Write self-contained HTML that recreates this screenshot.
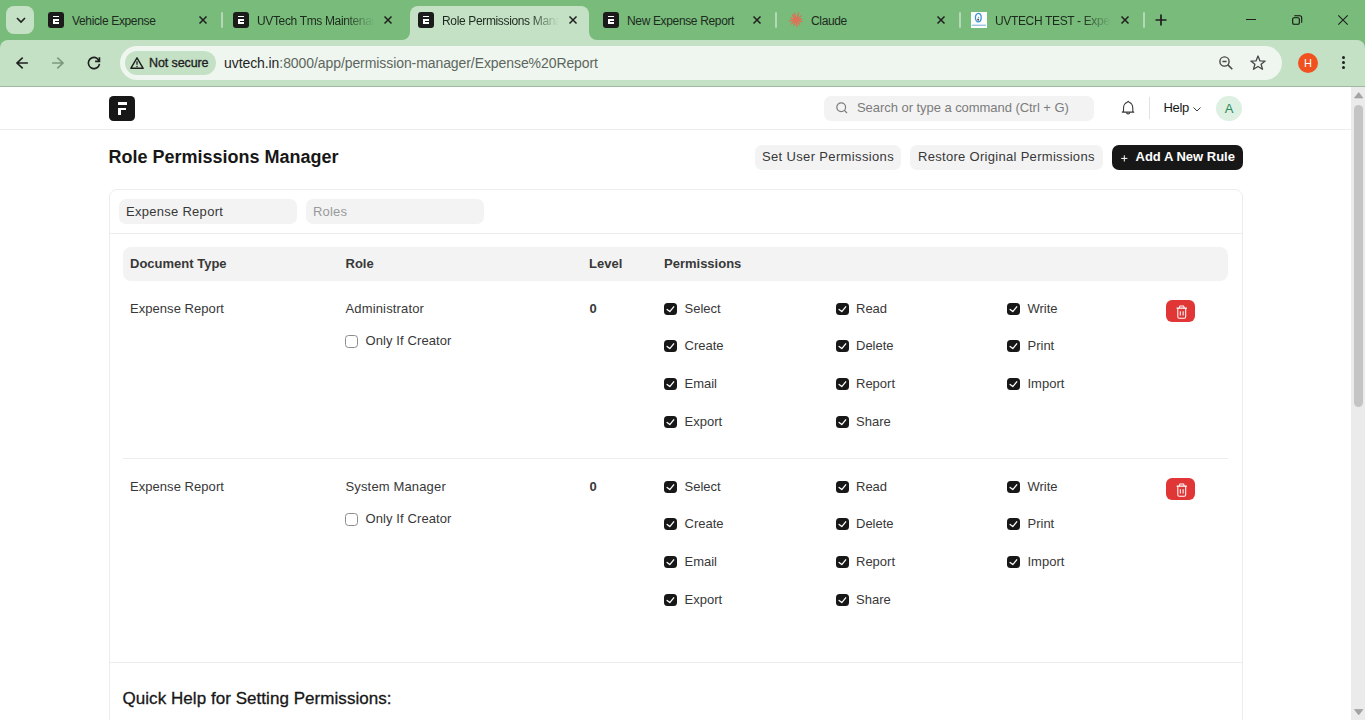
<!DOCTYPE html>
<html><head><meta charset="utf-8">
<style>
*{box-sizing:border-box;margin:0;padding:0}
html,body{width:1365px;height:720px;overflow:hidden;background:#fff;font-family:"Liberation Sans",sans-serif;position:relative}
.a{position:absolute}
.t{position:absolute;white-space:nowrap;line-height:1}
svg{position:absolute;overflow:visible}
/* chrome */
#strip{left:0;top:0;width:1365px;height:50px;background:#78bb7b}
#toolbar{left:0;top:40px;width:1365px;height:47px;background:#c4e1c5;border-radius:8px 8px 0 0}
#tbline{left:0;top:86px;width:1365px;height:1px;background:#9fb8a0}
.tabt{font-size:12px;color:#1d2a1e;top:15px;overflow:hidden;letter-spacing:-0.35px}
.fade{-webkit-mask-image:linear-gradient(to right,#000 75%,transparent 100%);mask-image:linear-gradient(to right,#000 75%,transparent 100%)}
.fav{width:16px;height:16px;top:12px;background:#1b1b1b;border-radius:3px}
.fav i{position:absolute;background:#fff;display:block}
.sep{width:2px;height:16px;top:12px;background:#b5d8b6;border-radius:1px}
/* frappe */
.txt{color:#383838;font-size:13px}
.cb{position:absolute;width:13px;height:12.2px;border-radius:3.5px;background:#171717}
.cb svg{left:0;top:0}
.cbo{position:absolute;width:13px;height:13px;border-radius:3.5px;border:1px solid #8c8c8c;background:#fff}
</style></head><body>

<!-- ===== Chrome tab strip ===== -->
<div id="strip" class="a"></div>
<!-- tab search dropdown -->
<div class="a" style="left:6px;top:6px;width:28px;height:28px;border-radius:8px;background:#c4e1c5"></div>
<svg style="left:15.5px;top:17px" width="10" height="6" viewBox="0 0 10 6"><path d="M1 1 L5 5 L9 1" fill="none" stroke="#1f1f1f" stroke-width="1.6"/></svg>

<!-- active tab -->
<div class="a" style="left:410px;top:6px;width:179px;height:40px;background:#c4e1c5;border-radius:8px 8px 0 0"></div>
<svg style="left:402px;top:32px" width="8" height="8" viewBox="0 0 8 8"><path d="M0 8 A8 8 0 0 0 8 0 L8 8 Z" fill="#c4e1c5"/></svg>
<svg style="left:589px;top:32px" width="8" height="8" viewBox="0 0 8 8"><path d="M8 8 A8 8 0 0 1 0 0 L0 8 Z" fill="#c4e1c5"/></svg>

<!-- tab 1 -->
<div class="a fav" style="left:48px"><i style="left:5px;top:3.8px;width:6px;height:1.5px"></i><i style="left:5px;top:7.3px;width:6px;height:4.7px"></i><i style="left:7.2px;top:8.8px;width:3.8px;height:1.5px;background:#1b1b1b"></i></div>
<div class="t tabt" style="left:72px;width:120px">Vehicle Expense</div>
<svg style="left:199px;top:16px" width="8" height="8" viewBox="0 0 8 8"><path d="M0.5 0.5 L7.5 7.5 M7.5 0.5 L0.5 7.5" stroke="#1f1f1f" stroke-width="1.5"/></svg>
<div class="a sep" style="left:221px"></div>
<!-- tab 2 -->
<div class="a fav" style="left:233px"><i style="left:5px;top:3.8px;width:6px;height:1.5px"></i><i style="left:5px;top:7.3px;width:6px;height:4.7px"></i><i style="left:7.2px;top:8.8px;width:3.8px;height:1.5px;background:#1b1b1b"></i></div>
<div class="t tabt fade" style="left:257px;width:117px">UVTech Tms Maintenance</div>
<svg style="left:384px;top:16px" width="8" height="8" viewBox="0 0 8 8"><path d="M0.5 0.5 L7.5 7.5 M7.5 0.5 L0.5 7.5" stroke="#1f1f1f" stroke-width="1.5"/></svg>
<!-- tab 3 active -->
<div class="a fav" style="left:418px"><i style="left:5px;top:3.8px;width:6px;height:1.5px"></i><i style="left:5px;top:7.3px;width:6px;height:4.7px"></i><i style="left:7.2px;top:8.8px;width:3.8px;height:1.5px;background:#1b1b1b"></i></div>
<div class="t tabt fade" style="left:442px;width:117px">Role Permissions Manager</div>
<svg style="left:569px;top:16px" width="8" height="8" viewBox="0 0 8 8"><path d="M0.5 0.5 L7.5 7.5 M7.5 0.5 L0.5 7.5" stroke="#1f1f1f" stroke-width="1.5"/></svg>
<!-- tab 4 -->
<div class="a fav" style="left:603px"><i style="left:5px;top:3.8px;width:6px;height:1.5px"></i><i style="left:5px;top:7.3px;width:6px;height:4.7px"></i><i style="left:7.2px;top:8.8px;width:3.8px;height:1.5px;background:#1b1b1b"></i></div>
<div class="t tabt" style="left:627px;width:120px">New Expense Report</div>
<svg style="left:753px;top:16px" width="8" height="8" viewBox="0 0 8 8"><path d="M0.5 0.5 L7.5 7.5 M7.5 0.5 L0.5 7.5" stroke="#1f1f1f" stroke-width="1.5"/></svg>
<div class="a sep" style="left:775px"></div>
<!-- tab 5 Claude -->
<svg style="left:787.5px;top:12px" width="16" height="16" viewBox="0 0 16 16"><path d="M8.0 8.0L10.46 1.23M8.0 8.0L6.24 1.43M8.0 8.0L12.83 3.95M8.0 8.0L13.51 7.03M8.0 8.0L13.99 9.60M8.0 8.0L11.60 12.29M8.0 8.0L9.13 14.40M8.0 8.0L6.02 13.45M8.0 8.0L3.48 11.79M8.0 8.0L1.50 9.15M8.0 8.0L2.83 6.12M8.0 8.0L4.56 3.09" stroke="#dd7256" stroke-width="1.4" stroke-linecap="round"/><circle cx="8" cy="8" r="2.6" fill="#dd7256"/></svg>
<div class="t tabt" style="left:811px;width:120px">Claude</div>
<svg style="left:937px;top:16px" width="8" height="8" viewBox="0 0 8 8"><path d="M0.5 0.5 L7.5 7.5 M7.5 0.5 L0.5 7.5" stroke="#1f1f1f" stroke-width="1.5"/></svg>
<div class="a sep" style="left:959px"></div>
<!-- tab 6 -->
<div class="a" style="left:971px;top:12px;width:16px;height:16px;background:#fdfdfd"></div>
<svg style="left:971px;top:12px" width="16" height="16" viewBox="0 0 16 16"><ellipse cx="7.3" cy="5.6" rx="2.9" ry="4.3" fill="none" stroke="#3a93d6" stroke-width="1.3"/><path d="M6.3 7.5L7.5 4.5L8.3 5.3Z" fill="#3a93d6"/><circle cx="7.2" cy="7.8" r="1" fill="#6b4a3a"/><rect x="0.8" y="12.6" width="14.2" height="1.4" fill="#9cc4e4"/></svg>
<div class="t tabt fade" style="left:995px;width:116px">UVTECH TEST - Expense</div>
<svg style="left:1121px;top:16px" width="8" height="8" viewBox="0 0 8 8"><path d="M0.5 0.5 L7.5 7.5 M7.5 0.5 L0.5 7.5" stroke="#1f1f1f" stroke-width="1.5"/></svg>
<div class="a sep" style="left:1143px"></div>
<!-- new tab -->
<svg style="left:1155px;top:14px" width="12" height="12" viewBox="0 0 12 12"><path d="M6 0.5V11.5M0.5 6H11.5" stroke="#1f1f1f" stroke-width="1.7"/></svg>
<!-- window controls -->
<div class="a" style="left:1246px;top:19px;width:10px;height:1.2px;background:#1f1f1f"></div>
<svg style="left:1291px;top:15px" width="12" height="11" viewBox="0 0 12 11"><rect x="1.7" y="2.7" width="6.6" height="6.6" rx="1.3" fill="none" stroke="#111" stroke-width="1.1"/><path d="M3.3 0.7H8.7A2 2 0 0 1 10.7 2.7V7.7" fill="none" stroke="#111" stroke-width="1.05"/></svg>
<svg style="left:1338px;top:15px" width="10" height="10" viewBox="0 0 10 10"><path d="M0.3 0.3L9.7 9.7M9.7 0.3L0.3 9.7" stroke="#1f1f1f" stroke-width="1.1"/></svg>

<!-- ===== Chrome toolbar ===== -->
<div id="toolbar" class="a"></div>
<div id="tbline" class="a"></div>
<!-- back -->
<svg style="left:16px;top:57px" width="12" height="12" viewBox="0 0 12 12"><path d="M6.7 0.7L1 6L6.7 11.3M1 6H11.9" fill="none" stroke="#1f1f1f" stroke-width="1.6"/></svg>
<svg style="left:52px;top:57px" width="12" height="12" viewBox="0 0 12 12"><path d="M5.3 0.7L11 6L5.3 11.3M11 6H0.1" fill="none" stroke="#7d977e" stroke-width="1.6"/></svg>
<svg style="left:88px;top:57px" width="13" height="13" viewBox="0 0 13 13"><path d="M11.5 6.9A5.6 5.6 0 1 1 9 1.3L11.2 4" fill="none" stroke="#1f1f1f" stroke-width="1.6"/><path d="M7.1 4.3H11.4V0.2" fill="none" stroke="#1f1f1f" stroke-width="1.7"/></svg>
<!-- omnibox -->
<div class="a" style="left:120px;top:46px;width:1162px;height:34px;border-radius:17px;background:#eff6ef"></div>
<div class="a" style="left:125px;top:51px;width:91px;height:24px;border-radius:12px;background:#c4e1c5"></div>
<svg style="left:130px;top:57px" width="14" height="12" viewBox="0 0 14 12"><path d="M7 0.8L13.2 11.3H0.8Z" fill="none" stroke="#1f1f1f" stroke-width="1.4" stroke-linejoin="round"/><path d="M7 4.2V7.8" stroke="#1f1f1f" stroke-width="1.3"/><circle cx="7" cy="9.4" r="0.75" fill="#1f1f1f"/></svg>
<div class="t" style="left:149px;top:57px;font-size:12.5px;color:#1f1f1f;-webkit-text-stroke:0.35px #1f1f1f;letter-spacing:-0.1px">Not secure</div>
<div class="t" style="left:224px;top:56px;font-size:14px;color:#5d665e;letter-spacing:-0.08px"><span style="color:#1f1f1f">uvtech.in</span>:8000/app/permission-manager/Expense%20Report</div>
<!-- zoom -->
<svg style="left:1219px;top:56px" width="14" height="14" viewBox="0 0 14 14"><circle cx="5.5" cy="5.5" r="4.6" fill="none" stroke="#474747" stroke-width="1.4"/><path d="M3.4 5.5H7.6M8.9 8.9L13.3 13.3" stroke="#474747" stroke-width="1.5"/></svg>
<!-- star -->
<svg style="left:1250px;top:55px" width="16" height="15" viewBox="0 0 16 15"><path d="M8 1L10 5.9L15.2 6.1L11.1 9.3L12.5 14.3L8 11.5L3.5 14.3L4.9 9.3L0.8 6.1L6 5.9Z" fill="none" stroke="#474747" stroke-width="1.3" stroke-linejoin="round"/></svg>
<!-- avatar -->
<div class="a" style="left:1298px;top:53px;width:20px;height:20px;border-radius:10px;background:#f0511e"></div>
<div class="t" style="left:1298px;top:58px;width:20px;text-align:center;font-size:11px;color:#fff">H</div>
<!-- menu -->
<div class="a" style="left:1342px;top:56px;width:3px;height:3px;border-radius:2px;background:#1f1f1f"></div>
<div class="a" style="left:1342px;top:61px;width:3px;height:3px;border-radius:2px;background:#1f1f1f"></div>
<div class="a" style="left:1342px;top:66px;width:3px;height:3px;border-radius:2px;background:#1f1f1f"></div>


<!-- ===== Page ===== -->
<div class="a" style="left:0;top:87px;width:1351px;height:633px;background:#fff"></div>
<!-- navbar -->
<div class="a" style="left:0;top:129px;width:1351px;height:1px;background:#ededed"></div>
<div class="a" style="left:109.3px;top:96.2px;width:25.4px;height:24.4px;border-radius:4.5px;background:#171717"></div>
<div class="a" style="left:117.8px;top:102px;width:9.3px;height:2.9px;background:#fff"></div>
<div class="a" style="left:117.8px;top:107.6px;width:8.4px;height:2.6px;background:#fff"></div>
<div class="a" style="left:117.8px;top:107.6px;width:3.3px;height:7.5px;background:#fff"></div>
<!-- search -->
<div class="a" style="left:824px;top:96px;width:270px;height:25px;border-radius:7px;background:#f3f3f3"></div>
<svg style="left:836px;top:101.5px" width="12" height="12" viewBox="0 0 12 12"><circle cx="5.2" cy="5.2" r="4.4" fill="none" stroke="#7c7c7c" stroke-width="1.2"/><path d="M8.4 8.4L11 11" stroke="#7c7c7c" stroke-width="1.2"/></svg>
<div class="t" style="left:857px;top:100.5px;font-size:13px;color:#7c7c7c;letter-spacing:-0.05px">Search or type a command (Ctrl + G)</div>
<!-- bell -->
<svg style="left:1121px;top:100px" width="14" height="16" viewBox="0 0 14 16"><path d="M7.2 1.4C6.6 2.4 4.7 2.6 3.8 4C2.8 5.1 2.5 6.4 2.5 8.3V11.4L1.3 12.1H12.9L11.8 11.4V8.3C11.8 6.4 11.5 5.1 10.6 4C9.7 2.6 7.8 2.4 7.2 1.4Z" fill="none" stroke="#3a3a3a" stroke-width="1.1" stroke-linejoin="round"/><path d="M5.5 12.3A1.6 1.7 0 0 0 8.7 12.3" fill="none" stroke="#3a3a3a" stroke-width="1.1"/></svg>
<div class="a" style="left:1149px;top:97px;width:1px;height:22px;background:#e2e2e2"></div>
<div class="t" style="left:1163.5px;top:101px;font-size:13px;color:#171717;letter-spacing:-0.3px">Help</div>
<svg style="left:1193.3px;top:106.8px" width="8" height="5" viewBox="0 0 8 5"><path d="M0.5 0.5L4 4L7.5 0.5" fill="none" stroke="#383838" stroke-width="1"/></svg>
<div class="a" style="left:1216px;top:96px;width:26px;height:25px;border-radius:13px;background:#ddf0e1"></div>
<div class="t" style="left:1216px;top:102px;width:26px;text-align:center;font-size:13px;color:#2b8a5e">A</div>

<!-- page head -->
<div class="t" style="left:108.5px;top:148px;font-size:18px;font-weight:700;color:#171717;letter-spacing:0px">Role Permissions Manager</div>
<div class="a" style="left:755px;top:145px;width:146px;height:25px;border-radius:7px;background:#f3f3f3"></div>
<div class="t txt" style="left:762px;top:150px;letter-spacing:0.35px">Set User Permissions</div>
<div class="a" style="left:910px;top:145px;width:193px;height:25px;border-radius:7px;background:#f3f3f3"></div>
<div class="t txt" style="left:918px;top:150px;letter-spacing:0.3px">Restore Original Permissions</div>
<div class="a" style="left:1112px;top:145px;width:131px;height:25px;border-radius:7px;background:#171717"></div>
<svg style="left:1121px;top:154.5px" width="7" height="7" viewBox="0 0 7 7"><path d="M3.3 0.3V6.5M0.2 3.4H6.4" stroke="#fff" stroke-width="1"/></svg>
<div class="t" style="left:1135.5px;top:150px;font-size:13px;font-weight:700;color:#fff">Add A New Rule</div>

<!-- card -->
<div class="a" style="left:109px;top:189px;width:1134px;height:600px;border:1px solid #ededed;border-radius:8px"></div>
<div class="a" style="left:119px;top:199px;width:178px;height:25px;border-radius:7px;background:#f3f3f3"></div>
<div class="t txt" style="left:126px;top:205px;letter-spacing:0.28px">Expense Report</div>
<div class="a" style="left:306px;top:199px;width:178px;height:25px;border-radius:7px;background:#f3f3f3"></div>
<div class="t txt" style="left:313px;top:205px;color:#9a9a9a;letter-spacing:0.2px">Roles</div>
<div class="a" style="left:110px;top:233px;width:1132px;height:1px;background:#ededed"></div>

<!-- table head -->
<div class="a" style="left:123px;top:247px;width:1105px;height:34px;border-radius:8px;background:#f3f3f3"></div>
<div class="t txt" style="left:130px;top:257px;font-weight:700">Document Type</div>
<div class="t txt" style="left:345.5px;top:257px;font-weight:700">Role</div>
<div class="t txt" style="left:589px;top:257px;font-weight:700">Level</div>
<div class="t txt" style="left:664px;top:257px;font-weight:700">Permissions</div>
<div class="a" style="left:123px;top:458px;width:1105px;height:1px;background:#ededed"></div>
<div class="a" style="left:110px;top:662px;width:1132px;height:1px;background:#ededed"></div>
<div class="t" style="left:122.5px;top:689.5px;font-size:17px;color:#171717;-webkit-text-stroke:0.3px #171717;letter-spacing:0.05px">Quick Help for Setting Permissions:</div>
<!-- ROWS -->
<div class="t txt" style="left:130px;top:302px;letter-spacing:0.05px">Expense Report</div>
<div class="t txt" style="left:345.5px;top:302px;letter-spacing:0.15px">Administrator</div>
<div class="cbo" style="left:345px;top:335px"></div>
<div class="t txt" style="left:365.5px;top:334px;letter-spacing:0.1px">Only If Creator</div>
<div class="t txt" style="left:589.5px;top:302px;font-weight:700">0</div>
<div class="a" style="left:1166px;top:300px;width:29px;height:22.4px;border-radius:6px;background:#e03636"></div>
<svg style="left:1175.5px;top:305px" width="12" height="14" viewBox="0 0 12 14"><path d="M0.6 3.1H10.9M3.2 3.1L3.9 0.9H7.6L8.3 3.1M1.8 3.1V11.7Q1.8 13.3 3.3 13.3H8.2Q9.7 13.3 9.7 11.7V3.1M4.3 6.3V10.5M7.1 6.3V10.5" fill="none" stroke="#fff" stroke-width="1.05" stroke-linejoin="round"/></svg>
<div class="cb" style="left:664px;top:303.0px"><svg width="13" height="13" viewBox="0 0 13 13"><path d="M3.1 6.5L5.8 8.6L9.7 3.8" fill="none" stroke="#fff" stroke-width="1.3" stroke-linecap="round" stroke-linejoin="round"/></svg></div>
<div class="t txt" style="left:684.5px;top:302.0px;letter-spacing:0px">Select</div>
<div class="cb" style="left:836px;top:303.0px"><svg width="13" height="13" viewBox="0 0 13 13"><path d="M3.1 6.5L5.8 8.6L9.7 3.8" fill="none" stroke="#fff" stroke-width="1.3" stroke-linecap="round" stroke-linejoin="round"/></svg></div>
<div class="t txt" style="left:856px;top:302.0px;letter-spacing:0px">Read</div>
<div class="cb" style="left:1007px;top:303.0px"><svg width="13" height="13" viewBox="0 0 13 13"><path d="M3.1 6.5L5.8 8.6L9.7 3.8" fill="none" stroke="#fff" stroke-width="1.3" stroke-linecap="round" stroke-linejoin="round"/></svg></div>
<div class="t txt" style="left:1027.5px;top:302.0px;letter-spacing:0px">Write</div>
<div class="cb" style="left:664px;top:340.2px"><svg width="13" height="13" viewBox="0 0 13 13"><path d="M3.1 6.5L5.8 8.6L9.7 3.8" fill="none" stroke="#fff" stroke-width="1.3" stroke-linecap="round" stroke-linejoin="round"/></svg></div>
<div class="t txt" style="left:684.5px;top:339.2px;letter-spacing:0px">Create</div>
<div class="cb" style="left:836px;top:340.2px"><svg width="13" height="13" viewBox="0 0 13 13"><path d="M3.1 6.5L5.8 8.6L9.7 3.8" fill="none" stroke="#fff" stroke-width="1.3" stroke-linecap="round" stroke-linejoin="round"/></svg></div>
<div class="t txt" style="left:856px;top:339.2px;letter-spacing:0px">Delete</div>
<div class="cb" style="left:1007px;top:340.2px"><svg width="13" height="13" viewBox="0 0 13 13"><path d="M3.1 6.5L5.8 8.6L9.7 3.8" fill="none" stroke="#fff" stroke-width="1.3" stroke-linecap="round" stroke-linejoin="round"/></svg></div>
<div class="t txt" style="left:1027.5px;top:339.2px;letter-spacing:0px">Print</div>
<div class="cb" style="left:664px;top:378.2px"><svg width="13" height="13" viewBox="0 0 13 13"><path d="M3.1 6.5L5.8 8.6L9.7 3.8" fill="none" stroke="#fff" stroke-width="1.3" stroke-linecap="round" stroke-linejoin="round"/></svg></div>
<div class="t txt" style="left:684.5px;top:377.2px;letter-spacing:0px">Email</div>
<div class="cb" style="left:836px;top:378.2px"><svg width="13" height="13" viewBox="0 0 13 13"><path d="M3.1 6.5L5.8 8.6L9.7 3.8" fill="none" stroke="#fff" stroke-width="1.3" stroke-linecap="round" stroke-linejoin="round"/></svg></div>
<div class="t txt" style="left:856px;top:377.2px;letter-spacing:0px">Report</div>
<div class="cb" style="left:1007px;top:378.2px"><svg width="13" height="13" viewBox="0 0 13 13"><path d="M3.1 6.5L5.8 8.6L9.7 3.8" fill="none" stroke="#fff" stroke-width="1.3" stroke-linecap="round" stroke-linejoin="round"/></svg></div>
<div class="t txt" style="left:1027.5px;top:377.2px;letter-spacing:0px">Import</div>
<div class="cb" style="left:664px;top:416.0px"><svg width="13" height="13" viewBox="0 0 13 13"><path d="M3.1 6.5L5.8 8.6L9.7 3.8" fill="none" stroke="#fff" stroke-width="1.3" stroke-linecap="round" stroke-linejoin="round"/></svg></div>
<div class="t txt" style="left:684.5px;top:415.0px;letter-spacing:0px">Export</div>
<div class="cb" style="left:836px;top:416.0px"><svg width="13" height="13" viewBox="0 0 13 13"><path d="M3.1 6.5L5.8 8.6L9.7 3.8" fill="none" stroke="#fff" stroke-width="1.3" stroke-linecap="round" stroke-linejoin="round"/></svg></div>
<div class="t txt" style="left:856px;top:415.0px;letter-spacing:0px">Share</div>

<div class="t txt" style="left:130px;top:480px;letter-spacing:0.05px">Expense Report</div>
<div class="t txt" style="left:345.5px;top:480px;letter-spacing:0.15px">System Manager</div>
<div class="cbo" style="left:345px;top:513px"></div>
<div class="t txt" style="left:365.5px;top:512px;letter-spacing:0.1px">Only If Creator</div>
<div class="t txt" style="left:589.5px;top:480px;font-weight:700">0</div>
<div class="a" style="left:1166px;top:478px;width:29px;height:22.4px;border-radius:6px;background:#e03636"></div>
<svg style="left:1175.5px;top:483px" width="12" height="14" viewBox="0 0 12 14"><path d="M0.6 3.1H10.9M3.2 3.1L3.9 0.9H7.6L8.3 3.1M1.8 3.1V11.7Q1.8 13.3 3.3 13.3H8.2Q9.7 13.3 9.7 11.7V3.1M4.3 6.3V10.5M7.1 6.3V10.5" fill="none" stroke="#fff" stroke-width="1.05" stroke-linejoin="round"/></svg>
<div class="cb" style="left:664px;top:481.0px"><svg width="13" height="13" viewBox="0 0 13 13"><path d="M3.1 6.5L5.8 8.6L9.7 3.8" fill="none" stroke="#fff" stroke-width="1.3" stroke-linecap="round" stroke-linejoin="round"/></svg></div>
<div class="t txt" style="left:684.5px;top:480.0px;letter-spacing:0px">Select</div>
<div class="cb" style="left:836px;top:481.0px"><svg width="13" height="13" viewBox="0 0 13 13"><path d="M3.1 6.5L5.8 8.6L9.7 3.8" fill="none" stroke="#fff" stroke-width="1.3" stroke-linecap="round" stroke-linejoin="round"/></svg></div>
<div class="t txt" style="left:856px;top:480.0px;letter-spacing:0px">Read</div>
<div class="cb" style="left:1007px;top:481.0px"><svg width="13" height="13" viewBox="0 0 13 13"><path d="M3.1 6.5L5.8 8.6L9.7 3.8" fill="none" stroke="#fff" stroke-width="1.3" stroke-linecap="round" stroke-linejoin="round"/></svg></div>
<div class="t txt" style="left:1027.5px;top:480.0px;letter-spacing:0px">Write</div>
<div class="cb" style="left:664px;top:518.2px"><svg width="13" height="13" viewBox="0 0 13 13"><path d="M3.1 6.5L5.8 8.6L9.7 3.8" fill="none" stroke="#fff" stroke-width="1.3" stroke-linecap="round" stroke-linejoin="round"/></svg></div>
<div class="t txt" style="left:684.5px;top:517.2px;letter-spacing:0px">Create</div>
<div class="cb" style="left:836px;top:518.2px"><svg width="13" height="13" viewBox="0 0 13 13"><path d="M3.1 6.5L5.8 8.6L9.7 3.8" fill="none" stroke="#fff" stroke-width="1.3" stroke-linecap="round" stroke-linejoin="round"/></svg></div>
<div class="t txt" style="left:856px;top:517.2px;letter-spacing:0px">Delete</div>
<div class="cb" style="left:1007px;top:518.2px"><svg width="13" height="13" viewBox="0 0 13 13"><path d="M3.1 6.5L5.8 8.6L9.7 3.8" fill="none" stroke="#fff" stroke-width="1.3" stroke-linecap="round" stroke-linejoin="round"/></svg></div>
<div class="t txt" style="left:1027.5px;top:517.2px;letter-spacing:0px">Print</div>
<div class="cb" style="left:664px;top:556.2px"><svg width="13" height="13" viewBox="0 0 13 13"><path d="M3.1 6.5L5.8 8.6L9.7 3.8" fill="none" stroke="#fff" stroke-width="1.3" stroke-linecap="round" stroke-linejoin="round"/></svg></div>
<div class="t txt" style="left:684.5px;top:555.2px;letter-spacing:0px">Email</div>
<div class="cb" style="left:836px;top:556.2px"><svg width="13" height="13" viewBox="0 0 13 13"><path d="M3.1 6.5L5.8 8.6L9.7 3.8" fill="none" stroke="#fff" stroke-width="1.3" stroke-linecap="round" stroke-linejoin="round"/></svg></div>
<div class="t txt" style="left:856px;top:555.2px;letter-spacing:0px">Report</div>
<div class="cb" style="left:1007px;top:556.2px"><svg width="13" height="13" viewBox="0 0 13 13"><path d="M3.1 6.5L5.8 8.6L9.7 3.8" fill="none" stroke="#fff" stroke-width="1.3" stroke-linecap="round" stroke-linejoin="round"/></svg></div>
<div class="t txt" style="left:1027.5px;top:555.2px;letter-spacing:0px">Import</div>
<div class="cb" style="left:664px;top:594.0px"><svg width="13" height="13" viewBox="0 0 13 13"><path d="M3.1 6.5L5.8 8.6L9.7 3.8" fill="none" stroke="#fff" stroke-width="1.3" stroke-linecap="round" stroke-linejoin="round"/></svg></div>
<div class="t txt" style="left:684.5px;top:593.0px;letter-spacing:0px">Export</div>
<div class="cb" style="left:836px;top:594.0px"><svg width="13" height="13" viewBox="0 0 13 13"><path d="M3.1 6.5L5.8 8.6L9.7 3.8" fill="none" stroke="#fff" stroke-width="1.3" stroke-linecap="round" stroke-linejoin="round"/></svg></div>
<div class="t txt" style="left:856px;top:593.0px;letter-spacing:0px">Share</div>
<!-- /ROWS -->
<!-- scrollbar -->
<div class="a" style="left:1351px;top:87px;width:14px;height:633px;background:#ebebeb"></div>
<svg style="left:1353.8px;top:92.2px" width="9.4" height="6.4" viewBox="0 0 9.4 6.4"><path d="M4.7 0.6L8.9 5.9H0.5Z" fill="#a3a3a3" stroke="#a3a3a3" stroke-width="0.8" stroke-linejoin="round"/></svg>
<div class="a" style="left:1354px;top:105px;width:9px;height:302px;border-radius:4.5px;background:#c4c4c4"></div>
<svg style="left:1353.8px;top:709.2px" width="9.4" height="6.4" viewBox="0 0 9.4 6.4"><path d="M4.7 5.9L8.9 0.5H0.5Z" fill="#a3a3a3" stroke="#a3a3a3" stroke-width="0.8" stroke-linejoin="round"/></svg>
</body></html>
